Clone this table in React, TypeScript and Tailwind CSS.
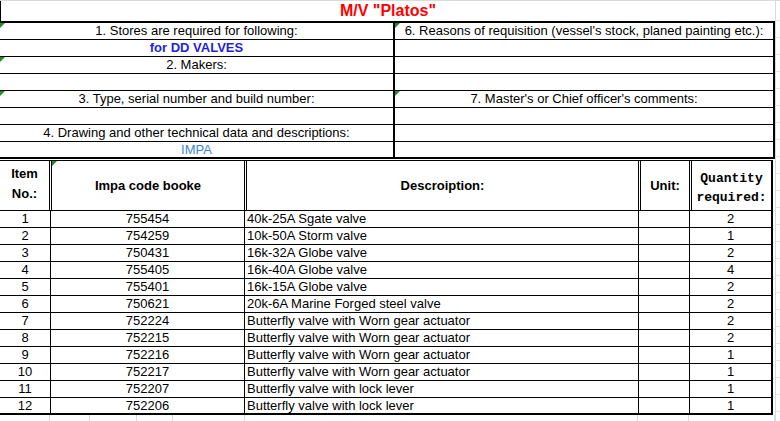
import React from 'react';

const LEFT_ROWS: { text: string; cls?: string; mark?: boolean }[] = [
    { text: '1. Stores are required for following:', mark: true },
    { text: 'for DD VALVES', cls: 'font-bold text-[#1f1fe0]' },
    { text: '2. Makers:', mark: true },
    { text: '' },
    { text: '3. Type, serial number and build number:', mark: true },
    { text: '' },
    { text: '4. Drawing and other technical data and descriptions:' },
    { text: 'IMPA', cls: 'text-[#3c86d8]' },
];

const RIGHT_ROWS: { text: string; mark?: boolean }[] = [
    { text: "6. Reasons of requisition (vessel's stock, planed painting etc.):", mark: true },
    { text: '' },
    { text: '' },
    { text: '' },
    { text: "7. Master's or Chief officer's comments:", mark: true },
    { text: '' },
    { text: '' },
    { text: '' },
];

const ITEMS = [
    { no: 1, code: '755454', desc: '40k-25A Sgate valve', qty: 2 },
    { no: 2, code: '754259', desc: '10k-50A Storm valve', qty: 1 },
    { no: 3, code: '750431', desc: '16k-32A Globe valve', qty: 2 },
    { no: 4, code: '755405', desc: '16k-40A Globe valve', qty: 4 },
    { no: 5, code: '755401', desc: '16k-15A Globe valve', qty: 2 },
    { no: 6, code: '750621', desc: '20k-6A Marine Forged steel valve', qty: 2 },
    { no: 7, code: '752224', desc: 'Butterfly valve with Worn gear actuator', qty: 2 },
    { no: 8, code: '752215', desc: 'Butterfly valve with Worn gear actuator', qty: 2 },
    { no: 9, code: '752216', desc: 'Butterfly valve with Worn gear actuator', qty: 1 },
    { no: 10, code: '752217', desc: 'Butterfly valve with Worn gear actuator', qty: 1 },
    { no: 11, code: '752207', desc: 'Butterfly valve with lock lever', qty: 1 },
    { no: 12, code: '752206', desc: 'Butterfly valve with lock lever', qty: 1 },
];

function Mark() {
    return <div className="absolute left-0 top-0 w-[5px] h-[5px] bg-[#1f8f1f] [clip-path:polygon(0_0,100%_0,0_100%)]" />;
}

function FormRow({ text, cls, mark, last }: { text: string; cls?: string; mark?: boolean; last?: boolean }) {
    return (
        <div
            className={`relative h-[17px] flex items-center justify-center leading-[16px] whitespace-nowrap ${
                last ? 'border-b-2' : 'border-b'
            } border-black ${cls ?? ''}`}
        >
            {mark && <Mark />}
            {text}
        </div>
    );
}

export default function App() {
    return (
        <div className="w-[780px] h-[421px] overflow-hidden bg-white text-black text-[13px] font-['Liberation_Sans',Arial,sans-serif] border-t border-[#dadada]">
            <div className="flex">
                <div className="w-[775px]">
                    {/* title */}
                    <div className="h-[20px] border-l border-black flex items-center justify-center text-[16px] font-bold text-[#ff0000]">
                        M/V "Platos"
                    </div>

                    {/* requisition header block */}
                    <div className="grid grid-cols-[393px_382px] border-t-2 border-black">
                        <div>
                            {LEFT_ROWS.map((r, i) => (
                                <FormRow key={i} {...r} last={i === LEFT_ROWS.length - 1} />
                            ))}
                        </div>
                        <div className="border-l-2 border-r-2 border-black">
                            {RIGHT_ROWS.map((r, i) => (
                                <FormRow key={i} {...r} last={i === RIGHT_ROWS.length - 1} />
                            ))}
                        </div>
                    </div>

                    {/* items table */}
                    <div className="w-[773px] mt-px border-r-2 border-black">
                        <div className="grid grid-cols-[49px_195px_394px_51px_82px] h-[51px] border-t border-b border-black font-bold">
                            <div className="flex items-center justify-center text-center leading-[20px] pb-[3px]">
                                Item
                                <br />
                                No.:
                            </div>
                            <div className="relative border-l-[3px] border-double border-black flex items-center justify-center">
                                <Mark />
                                Impa code booke
                            </div>
                            <div className="border-l-[3px] border-double border-black flex items-center justify-center">
                                Descroiption:
                            </div>
                            <div className="border-l-[3px] border-double border-black flex items-center justify-center">
                                Unit:
                            </div>
                            <div className="border-l-[3px] border-double border-black flex items-center justify-center text-center text-[13px] leading-[19px] font-['Liberation_Mono',monospace] pt-[4px]">
                                Quantity
                                <br />
                                required:
                            </div>
                        </div>

                        {ITEMS.map((it, i) => (
                            <div
                                key={it.no}
                                className={`grid grid-cols-[50px_194px_394px_51px_82px] h-[17px] leading-[16px] border-black ${
                                    i === ITEMS.length - 1 ? 'border-b-2' : 'border-b'
                                }`}
                            >
                                <div className="text-center">{it.no}</div>
                                <div className="border-l border-black text-center">{it.code}</div>
                                <div className="border-l border-black pl-[2px] whitespace-nowrap">{it.desc}</div>
                                <div className="border-l border-black" />
                                <div className="border-l border-black text-center">{it.qty}</div>
                            </div>
                        ))}
                    </div>

                    {/* sheet gridlines below the table */}
                    <div className="flex h-[6px]">
                        <div className="w-[50px] border-r border-[#dadada]" />
                        <div className="w-[40px] border-r border-[#dadada]" />
                        <div className="w-[47px] border-r border-[#dadada]" />
                        <div className="w-[36px] border-r border-[#dadada]" />
                        <div className="w-[72px] border-r border-[#dadada]" />
                        <div className="w-[393px] border-r border-[#dadada]" />
                        <div className="w-[51px] border-r border-[#dadada]" />
                        <div className="w-[86px] border-r border-[#dadada]" />
                    </div>
                </div>

                {/* sheet gridlines to the right */}
                <div className="flex-1 border-l border-[#dadada]">
                    <div className="h-[20px] border-b border-[#e4e4e4]" />
                    {Array.from({ length: 24 }).map((_, i) => (
                        <div key={i} className="h-[17px] border-b border-[#e4e4e4]" />
                    ))}
                </div>
            </div>
        </div>
    );
}
